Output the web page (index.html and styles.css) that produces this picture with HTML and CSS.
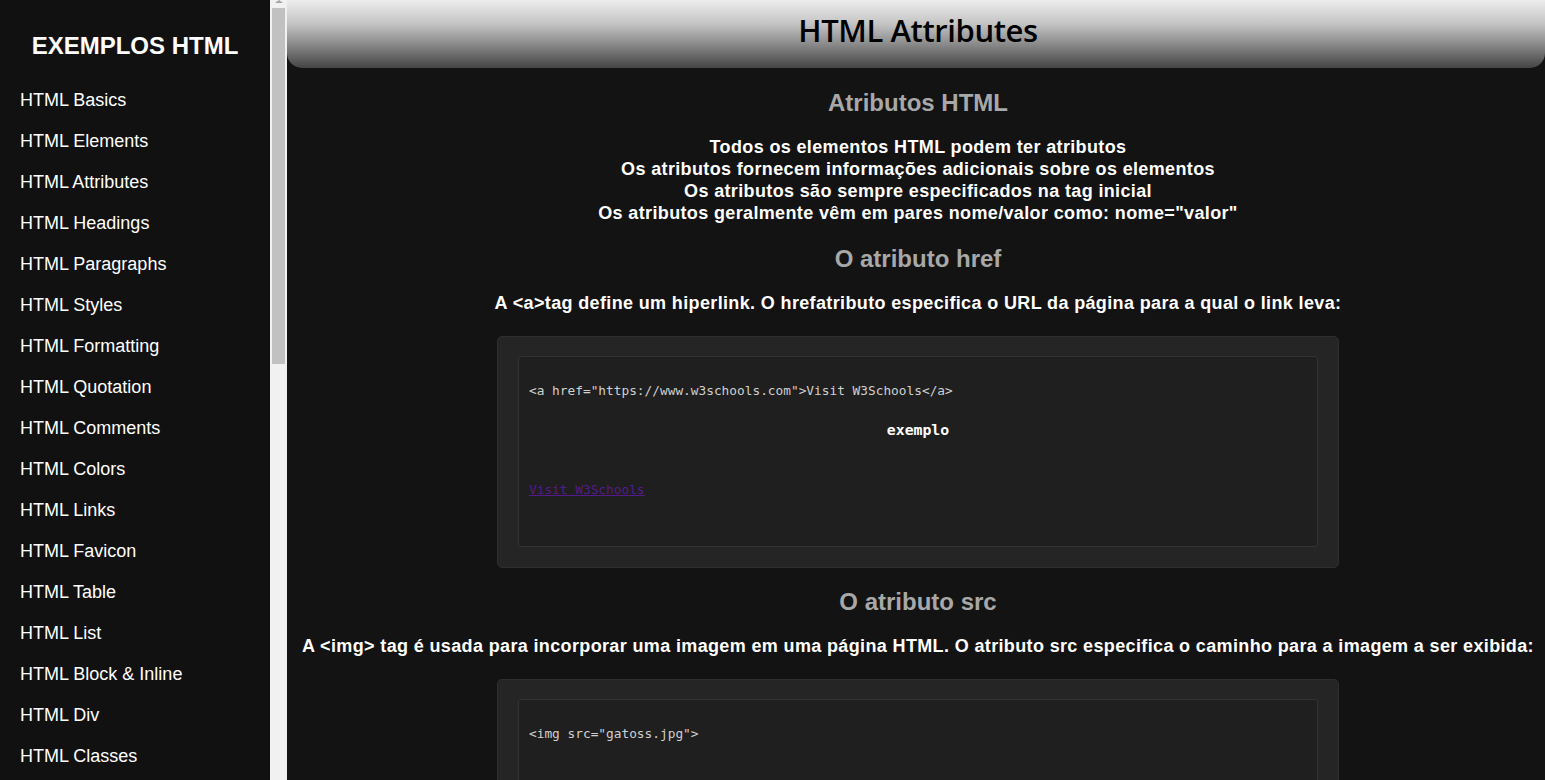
FILE: index.html
```html
<!DOCTYPE html>
<html lang="pt">
<head>
<meta charset="utf-8">
<title>HTML Attributes</title>
<link rel="stylesheet" href="styles.css">
</head>
<body>
<div class="layout">
  <aside class="sidebar">
    <nav class="side-nav">
      <h1 class="side-title">EXEMPLOS HTML</h1>
      <ul class="side-list">
        <li><a href="#">HTML Basics</a></li>
        <li><a href="#">HTML Elements</a></li>
        <li><a href="#">HTML Attributes</a></li>
        <li><a href="#">HTML Headings</a></li>
        <li><a href="#">HTML Paragraphs</a></li>
        <li><a href="#">HTML Styles</a></li>
        <li><a href="#">HTML Formatting</a></li>
        <li><a href="#">HTML Quotation</a></li>
        <li><a href="#">HTML Comments</a></li>
        <li><a href="#">HTML Colors</a></li>
        <li><a href="#">HTML Links</a></li>
        <li><a href="#">HTML Favicon</a></li>
        <li><a href="#">HTML Table</a></li>
        <li><a href="#">HTML List</a></li>
        <li><a href="#">HTML Block &amp; Inline</a></li>
        <li><a href="#">HTML Div</a></li>
        <li><a href="#">HTML Classes</a></li>
      </ul>
    </nav>
    <div class="scrollbar">
      <div class="scroll-arrow"></div>
      <div class="scroll-thumb"></div>
    </div>
  </aside>
  <main class="main">
    <header class="page-header">
      <h1 class="page-title">HTML Attributes</h1>
    </header>
    <div class="content">
      <h2 class="sec-title first">Atributos HTML</h2>
      <p class="lead">Todos os elementos HTML podem ter atributos<br>Os atributos fornecem informações adicionais sobre os elementos<br>Os atributos são sempre especificados na tag inicial<br>Os atributos geralmente vêm em pares nome/valor como: nome="valor"</p>

      <h2 class="sec-title">O atributo href</h2>
      <p class="desc">A &lt;a&gt;tag define um hiperlink. O hrefatributo especifica o URL da página para a qual o link leva:</p>
      <div class="example">
        <div class="example-inner">
          <div class="code">&lt;a href="https://www.w3schools.com"&gt;Visit W3Schools&lt;/a&gt;</div>
          <div class="ex-label">exemplo</div>
          <a class="ex-link" href="#">Visit W3Schools</a>
        </div>
      </div>

      <h2 class="sec-title">O atributo src</h2>
      <p class="desc">A &lt;img&gt; tag é usada para incorporar uma imagem em uma página HTML. O atributo src especifica o caminho para a imagem a ser exibida:</p>
      <div class="example">
        <div class="example-inner">
          <div class="code">&lt;img src="gatoss.jpg"&gt;</div>
        </div>
      </div>
    </div>
  </main>
</div>
</body>
</html>
```

FILE: styles.css
```css
html, body {
  margin: 0;
  padding: 0;
  height: 100%;
  overflow: hidden;
  background: #131313;
  font-family: "Liberation Sans", Arial, sans-serif;
}

.layout {
  display: flex;
  height: 100vh;
}

.sidebar {
  flex: 0 0 287px;
  height: 100vh;
  display: flex;
  overflow: hidden;
  background: #111111;
}

.side-nav {
  width: 270px;
  flex: 0 0 270px;
  overflow: hidden;
}

.scrollbar {
  flex: 0 0 17px;
  width: 17px;
  height: 100%;
  background: #f1f1f1;
  display: flex;
  flex-direction: column;
  align-items: center;
}

.scroll-arrow {
  width: 0;
  height: 0;
  border-left: 4px solid transparent;
  border-right: 4px solid transparent;
  border-bottom: 3px solid #a3a3a3;
}

.scroll-thumb {
  margin-top: 5px;
  width: 13px;
  height: 356px;
  background: #c1c1c1;
}

.side-title {
  margin: 32px 0 0;
  width: 270px;
  text-align: center;
  color: #ffffff;
  font-size: 24px;
  line-height: 28px;
  font-weight: bold;
}

.side-list {
  list-style: none;
  margin: 20px 0 0;
  padding: 0;
}

.side-list li {
  height: 41px;
  line-height: 41px;
  padding-left: 20px;
}

.side-list a {
  color: #ffffff;
  text-decoration: none;
  font-size: 18px;
}

.main {
  flex: 1;
  min-width: 0;
  height: 100vh;
  overflow: hidden;
  display: flex;
  flex-direction: column;
  background: #131313;
}

.page-header {
  height: 68px;
  flex: 0 0 68px;
  background: linear-gradient(to bottom, #ededed 0%, #c4c4c4 35%, #8a8a8a 65%, #444444 100%);
  border-radius: 0 0 15px 15px;
  display: flex;
  justify-content: center;
  align-items: center;
  padding-left: 4px;
}

.page-title {
  margin: 0;
  font-family: "Open Sans", sans-serif;
  font-size: 31px;
  font-weight: 600;
  letter-spacing: -0.4px;
  color: #000000;
  line-height: 1;
  position: relative;
  top: -4px;
}

.content {
  display: flex;
  flex-direction: column;
  align-items: center;
  padding-left: 4px;
}

.sec-title {
  margin: 20px 0 0;
  font-size: 24px;
  line-height: 28px;
  font-weight: bold;
  color: #a8a8a8;
  text-align: center;
}

.sec-title.first {
  margin-top: 21px;
}

.lead, .desc {
  margin: 19px 0 0;
  font-size: 18px;
  line-height: 22px;
  font-weight: bold;
  letter-spacing: 0.36px;
  color: #ffffff;
  text-align: center;
  white-space: nowrap;
}

.lead + .sec-title {
  margin-top: 21px;
}

.example {
  margin-top: 22px;
  width: 842px;
  box-sizing: border-box;
  background: #252525;
  border: 1px solid #2f2f2f;
  border-radius: 5px;
  padding: 19px 20px 20px;
  flex: 0 0 auto;
}

.example-inner {
  box-sizing: border-box;
  height: 191px;
  background: #1f1f1f;
  border: 1px solid #333333;
  border-radius: 3px;
  padding: 25px 10px 0;
  display: flex;
  flex-direction: column;
}

.code {
  font-family: "DejaVu Sans Mono", "Liberation Mono", monospace;
  font-size: 12.8px;
  line-height: 18px;
  color: #d0d0d0;
  white-space: pre;
}

.ex-label {
  margin-top: 21px;
  font-family: "DejaVu Sans Mono", "Liberation Mono", monospace;
  font-size: 14.8px;
  line-height: 18px;
  font-weight: bold;
  color: #ffffff;
  text-align: center;
}

.ex-link {
  margin-top: 42px;
  align-self: flex-start;
  font-family: "DejaVu Sans Mono", "Liberation Mono", monospace;
  font-size: 12.8px;
  line-height: 18px;
  color: #551a8b;
  text-decoration: underline;
}
```
